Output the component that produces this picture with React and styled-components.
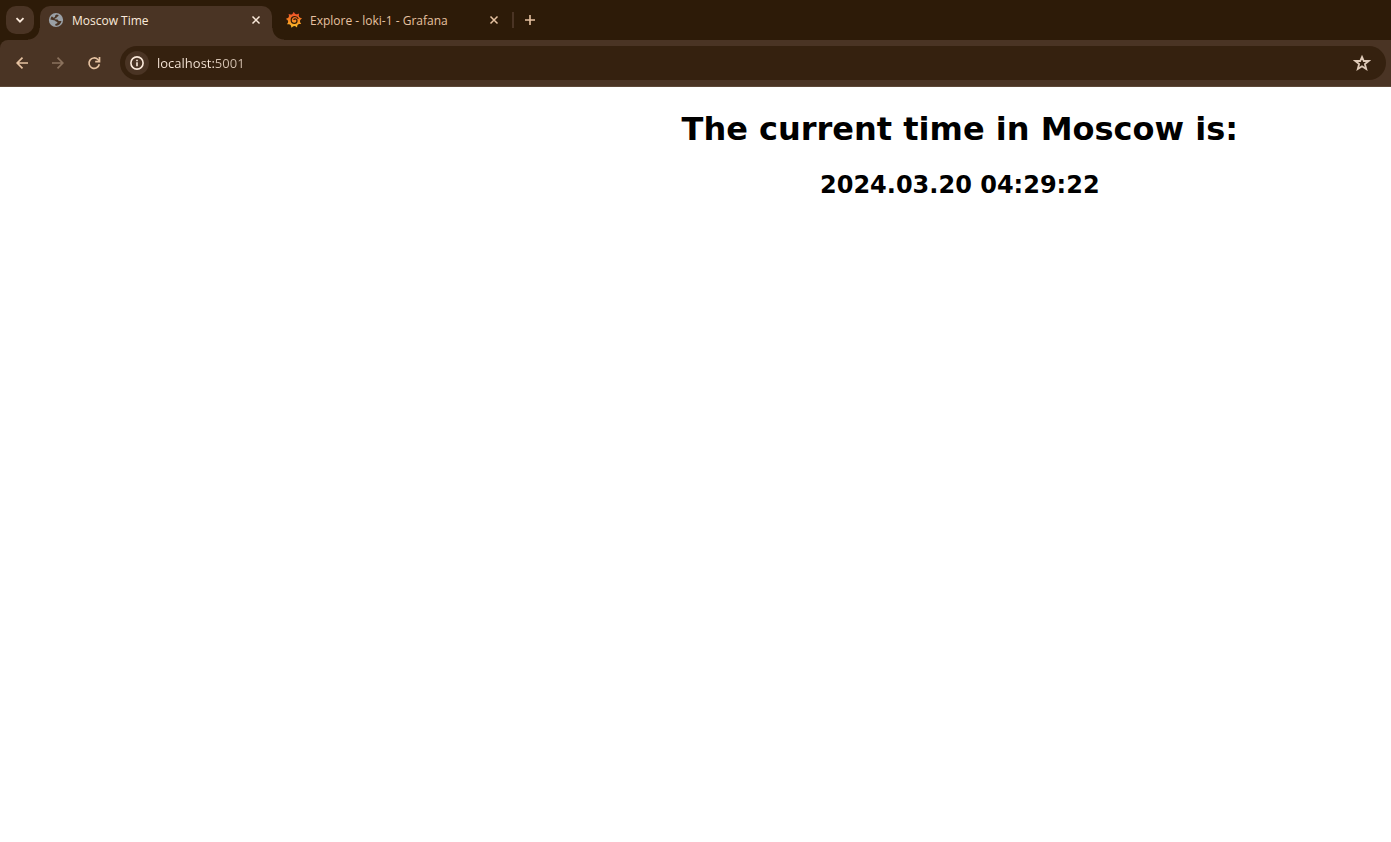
import React from "react";
import styled, { createGlobalStyle } from "styled-components";

const GlobalStyle = createGlobalStyle`
  *, *::before, *::after { box-sizing: border-box; }
  body { margin: 0; background: #fff; }
  button, input { font: inherit; border: 0; margin: 0; padding: 0; background: none; }
  svg { display: block; flex: none; }
`;

const color = {
  strip: "#2d1b08",
  toolbar: "#4a3424",
  field: "#35210f",
  line: "#5d4837",
  bright: "#fbeadb",
  soft: "#e6c2a1",
  dim: "#8b725d",
};

const Browser = styled.div`
  font-family: "Open Sans", "Noto Sans", sans-serif;
  background: ${color.strip};
`;

const TabStrip = styled.header`
  display: flex;
  align-items: center;
  height: 40px;
  padding-left: 6px;
`;

const TabSearch = styled.button`
  display: grid;
  place-items: center;
  width: 28px;
  height: 28px;
  margin-right: 6px;
  border-radius: 10px;
  background: ${color.toolbar};
  color: ${color.bright};
`;

const Tab = styled.div`
  position: relative;
  display: flex;
  align-items: center;
  gap: 8px;
  align-self: flex-end;
  width: ${(p) => (p.$active ? 232 : 240)}px;
  height: 34px;
  padding: ${(p) => (p.$active ? "0 10px 6px 8px" : "0 12px 6px 14px")};
  border-radius: 10px 10px 0 0;
  background: ${(p) => (p.$active ? color.toolbar : "transparent")};
  color: ${(p) => (p.$active ? color.bright : color.soft)};

  &::before,
  &::after {
    content: ${(p) => (p.$active ? '""' : "none")};
    position: absolute;
    bottom: 0;
    width: 12px;
    height: 12px;
  }
  &::before {
    right: 100%;
    background: radial-gradient(circle at 0 0, transparent 11px, ${color.toolbar} 12px);
  }
  &::after {
    left: 100%;
    background: radial-gradient(circle at 100% 0, transparent 11px, ${color.toolbar} 12px);
  }
`;

const TabTitle = styled.span`
  flex: 1;
  min-width: 0;
  padding-top: 2px;
  overflow: hidden;
  font-size: 12px;
  line-height: 16px;
  white-space: nowrap;
`;

const TabClose = styled.button`
  display: grid;
  place-items: center;
  width: 12px;
  height: 16px;
  color: inherit;
`;

const Divider = styled.span`
  width: 2px;
  height: 16px;
  background: ${color.toolbar};
`;

const NewTab = styled.button`
  display: grid;
  place-items: center;
  width: 28px;
  height: 28px;
  margin-left: 2px;
  color: ${color.soft};
`;

const Toolbar = styled.nav`
  display: flex;
  align-items: center;
  gap: 8px;
  height: 47px;
  padding: 0 5px 0 8px;
  border-bottom: 1px solid ${color.line};
  border-radius: 8px 0 0 0;
  background: ${color.toolbar};
`;

const NavButton = styled.button`
  display: grid;
  place-items: center;
  width: 28px;
  height: 28px;
  color: ${(p) => (p.disabled ? color.dim : color.soft)};
`;

const AddressBar = styled.div`
  display: flex;
  flex: 1;
  align-items: center;
  gap: 8px;
  height: 34px;
  margin-left: 4px;
  padding: 0 10px 0 5px;
  border-radius: 17px;
  background: ${color.field};
`;

const SiteInfo = styled.button`
  display: grid;
  place-items: center;
  width: 24px;
  height: 24px;
  border-radius: 50%;
  background: ${color.toolbar};
  color: ${color.bright};
`;

const Address = styled.input`
  flex: 1;
  min-width: 0;
  height: 24px;
  outline: 0;
  font-size: 13px;
  color: transparent;
  caret-color: ${color.bright};
  background: linear-gradient(90deg, ${color.bright} 58px, #d5c2b1 58px);
  background-clip: text;
  -webkit-background-clip: text;
`;

const Bookmark = styled.button`
  display: grid;
  place-items: center;
  width: 28px;
  height: 28px;
  color: #dfcab8;
`;

const Page = styled.main`
  padding: 22px 0 0 38%;
  font-family: Verdana, "DejaVu Sans", sans-serif;
  font-weight: bold;
  text-align: center;
  color: #000;
`;

const Heading = styled.h1`
  margin: 0;
  font-size: 32px;
  line-height: 40px;
  white-space: nowrap;
`;

const Time = styled.h2`
  margin: 20px 0 0;
  font-size: 24px;
  line-height: 32px;
`;

const Stroke = ({ size, d, width }) => (
  <svg width={size} height={size} viewBox={`0 0 ${size} ${size}`} fill="none" stroke="currentColor" strokeWidth={width} aria-hidden="true">
    <path d={d} />
  </svg>
);

const Close = () => <Stroke size={10} width={1.5} d="M1.5 1.5l7 7M8.5 1.500l-7 7" />;

const Globe = () => (
  <svg width="16" height="16" viewBox="0 0 16 16" aria-hidden="true">
    <circle cx="8" cy="8" r="7.1" fill="#9aa0a6" />
    <path
      fill={color.toolbar}
      d="M8.600 2.600L10.600 2.900C10.600 4 9.900 4.700 8.800 4.800L8.500 6.100L6.800 6.500L6.800 7.300L9.600 7.600L10.700 9L13.500 9C13 11.400 11 13.400 8.600 13.700L7.300 13.400V12L9.300 11.300L9.400 10.100L7.900 9.600L6.900 8.500L2.400 7.600C2.500 6.300 3.100 5.200 3.900 4.300L5.500 5.800L7 5.100L7.200 3.600Z"
    />
  </svg>
);

const toothed = (() => {
  const points = [];
  const teeth = 9;
  for (let i = 0; i < teeth; i += 1) {
    [[-0.5, 6], [-0.22, 6.5], [0, 8.2], [0.22, 6.5]].forEach(([t, r]) => {
      const a = ((i + t) / teeth) * Math.PI * 2 - 1.6;
      points.push(`${(8 + r * Math.cos(a)).toFixed(2)} ${(8 + r * Math.sin(a)).toFixed(2)}`);
    });
  }
  return `M${points.join("L")}Z`;
})();

const Grafana = () => (
  <svg width="16" height="16" viewBox="0 0 16 16" aria-hidden="true">
    <defs>
      <linearGradient id="flame" x1="0" y1="0" x2="0" y2="1">
        <stop offset="0.1" stopColor="#f0502b" />
        <stop offset="0.5" stopColor="#f58220" />
        <stop offset="1" stopColor="#fdc52c" />
      </linearGradient>
    </defs>
    <path d={toothed} fill="url(#flame)" />
    <path
      d="M12.300 6.900C11.700 5.300 10.400 4.500 8.900 4.500 6.700 4.500 5.200 6.100 5.200 8c0 2 1.500 3.300 3.200 3.300 1.500 0 2.600-1 2.600-2.400 0-1.200-.9-2-1.900-2-.8 0-1.300.5-1.300 1.100"
      fill="none"
      stroke={color.strip}
      strokeWidth="1.200"
    />
  </svg>
);

const Reload = () => (
  <svg width="14" height="14" viewBox="0 0 14 14" aria-hidden="true">
    <path d="M12.300 8.300A5.200 5.200 0 1 1 10.900 3.500L12.300 4.900" fill="none" stroke="currentColor" strokeWidth="1.700" />
    <path d="M12.500 1V5.700H8.200" fill="none" stroke="currentColor" strokeWidth="1.700" />
  </svg>
);

const Info = () => (
  <svg width="14" height="14" viewBox="0 0 14 14" aria-hidden="true">
    <circle cx="7" cy="7" r="6.100" fill="none" stroke="currentColor" strokeWidth="1.600" />
    <path fill="currentColor" d="M6.200 6.300h1.600v4H6.200zM6.200 3.700h1.600v1.500H6.200z" />
  </svg>
);

const Star = () => (
  <svg width="18" height="18" viewBox="0 0 18 18" aria-hidden="true">
    <path
      d="M9 2.900L10.800 7H15.600L11.900 10.100L13.200 15L9 12.300L4.800 15L6.100 10.100L2.400 7H7.200Z"
      fill="none"
      stroke="currentColor"
      strokeWidth="1.800"
    />
  </svg>
);

const tabs = [
  { title: "Moscow Time", icon: <Globe />, active: true },
  { title: "Explore - loki-1 - Grafana", icon: <Grafana />, active: false },
];

export default function App() {
  return (
    <>
      <GlobalStyle />
      <Browser>
        <TabStrip>
          <TabSearch aria-label="Search tabs">
            <Stroke size={10} width={1.8} d="M1.500 3.200L5 6.700l3.500-3.500" />
          </TabSearch>
          {tabs.map((tab) => (
            <Tab key={tab.title} $active={tab.active}>
              {tab.icon}
              <TabTitle>{tab.title}</TabTitle>
              <TabClose aria-label="Close tab">
                <Close />
              </TabClose>
            </Tab>
          ))}
          <Divider />
          <NewTab aria-label="New tab">
            <Stroke size={12} width={1.6} d="M6 1v10M1 6h10" />
          </NewTab>
        </TabStrip>
        <Toolbar>
          <NavButton aria-label="Back">
            <Stroke size={12} width={1.7} d="M12 6H1.500M6.500 .7L1.200 6l5.300 5.300" />
          </NavButton>
          <NavButton aria-label="Forward" disabled>
            <Stroke size={12} width={1.7} d="M0 6h10.500M5.500 .7L10.800 6l-5.300 5.300" />
          </NavButton>
          <NavButton aria-label="Reload">
            <Reload />
          </NavButton>
          <AddressBar>
            <SiteInfo aria-label="Site information">
              <Info />
            </SiteInfo>
            <Address aria-label="Address" defaultValue="localhost:5001" spellCheck={false} />
            <Bookmark aria-label="Bookmark this page">
              <Star />
            </Bookmark>
          </AddressBar>
        </Toolbar>
      </Browser>
      <Page>
        <Heading>The current time in Moscow is:</Heading>
        <Time>2024.03.20 04:29:22</Time>
      </Page>
    </>
  );
}
